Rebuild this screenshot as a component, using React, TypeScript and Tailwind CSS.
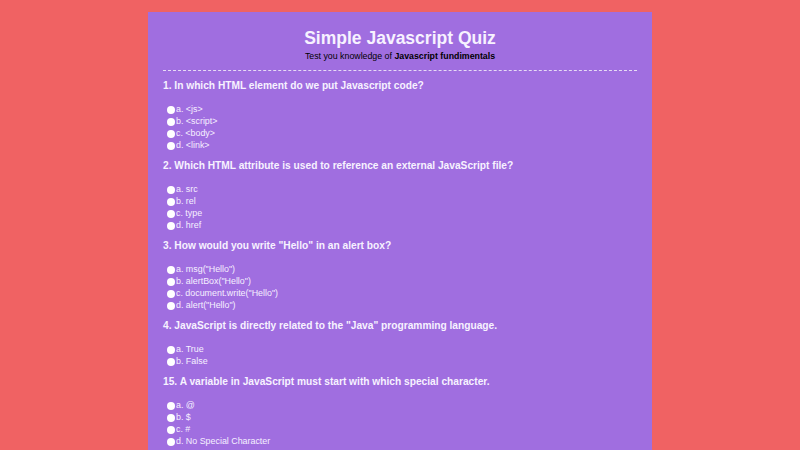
const questions = [
  {
    n: "1",
    q: "In which HTML element do we put Javascript code?",
    opts: ["a. <js>", "b. <script>", "c. <body>", "d. <link>"],
  },
  {
    n: "2",
    q: "Which HTML attribute is used to reference an external JavaScript file?",
    opts: ["a. src", "b. rel", "c. type", "d. href"],
  },
  {
    n: "3",
    q: 'How would you write "Hello" in an alert box?',
    opts: ['a. msg("Hello")', 'b. alertBox("Hello")', 'c. document.write("Hello")', 'd. alert("Hello")'],
  },
  {
    n: "4",
    q: 'JavaScript is directly related to the "Java" programming language.',
    opts: ["a. True", "b. False"],
  },
  {
    n: "15",
    q: "A variable in JavaScript must start with which special character.",
    opts: ["a. @", "b. $", "c. #", "d. No Special Character"],
  },
];

export default function App() {
  return (
    <div
      className="w-[800px] h-[450px] overflow-hidden bg-[#f06263] pt-[12px]"
      style={{ fontFamily: '"Liberation Sans", Arial, sans-serif' }}
    >
      <div className="mx-auto w-[504px] h-[460px] bg-[#a06ee0] px-[15px] pt-[15px]">
        <h1 className="text-center text-[17.5px] font-bold text-[#f7f2ff] leading-[22px]">
          Simple Javascript Quiz
        </h1>
        <p className="mt-[1px] text-center text-[8.8px] leading-[12px] text-black">
          Test you knowledge of <b>Javascript fundimentals</b>
        </p>
        <div className="mt-[8px] border-t border-dashed border-[#e6dcf5]" />
        <div className="pt-[8px]">
          {questions.map((item) => (
            <div key={item.n} className="mb-[7px]">
              <h2 className="text-[10.2px] font-bold leading-[14px] text-[#f7f2ff]">
                {item.n}. {item.q}
              </h2>
              <ul className="mt-[11px] pl-[4px]">
                {item.opts.map((o) => (
                  <li key={o} className="flex items-center h-[12px] text-[8.9px] text-[#f6f0ff]">
                    <span className="mr-[1px] -mt-[1px] inline-block h-[8px] w-[8px] rounded-full bg-white" />
                    {o}
                  </li>
                ))}
              </ul>
            </div>
          ))}
        </div>
      </div>
    </div>
  );
}
